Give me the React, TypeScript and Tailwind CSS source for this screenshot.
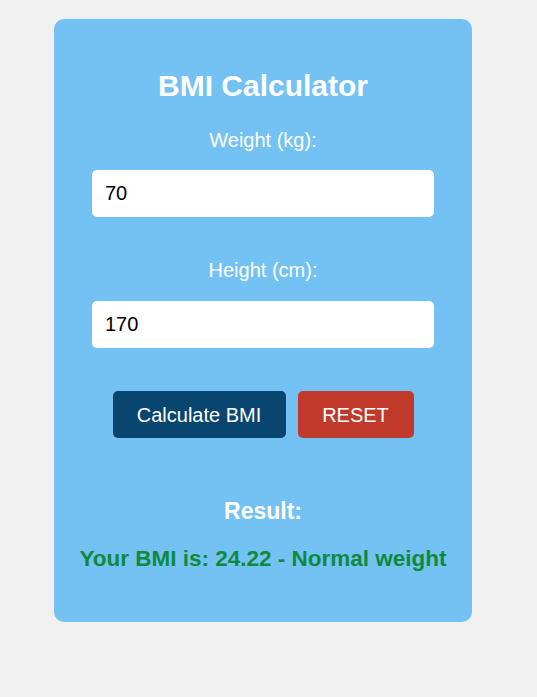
const App = () => {
  return (
    <div className="min-h-[697px] w-full bg-[#f0f0f0] pt-[19px] pl-[54px]" style={{ fontFamily: '"Liberation Sans", Arial, sans-serif' }}>
      <div className="flex w-[418px] flex-col items-center rounded-[10px] bg-[#74c1f3] pt-[49px] pb-[49px]">
        <h2 className="text-[30px] leading-[36px] font-bold text-white">BMI Calculator</h2>

        <label className="mt-[24px] text-[20px] leading-[24px] text-white">Weight (kg):</label>
        <input
          type="text"
          defaultValue="70"
          className="mt-[18px] h-[47px] w-[342px] rounded-[5px] bg-white px-[13px] text-[20px] text-black outline-none"
        />

        <label className="mt-[41px] text-[20px] leading-[24px] text-white">Height (cm):</label>
        <input
          type="text"
          defaultValue="170"
          className="mt-[19px] h-[47px] w-[342px] rounded-[5px] bg-white px-[13px] text-[20px] text-black outline-none"
        />

        <div className="mt-[43px] flex gap-[12px]">
          <button className="h-[47px] w-[173px] rounded-[5px] bg-[#08466f] text-[20px] text-white">Calculate BMI</button>
          <button className="h-[47px] w-[116px] rounded-[5px] bg-[#c0392b] text-[20px] text-white">RESET</button>
        </div>

        <h3 className="mt-[59px] text-[23px] leading-[28px] font-bold text-white">Result:</h3>
        <p className="mt-[20px] text-[22.5px] leading-[28px] font-bold text-[#0e8a3e]">Your BMI is: 24.22 - Normal weight</p>
      </div>
    </div>
  )
}

export default App
